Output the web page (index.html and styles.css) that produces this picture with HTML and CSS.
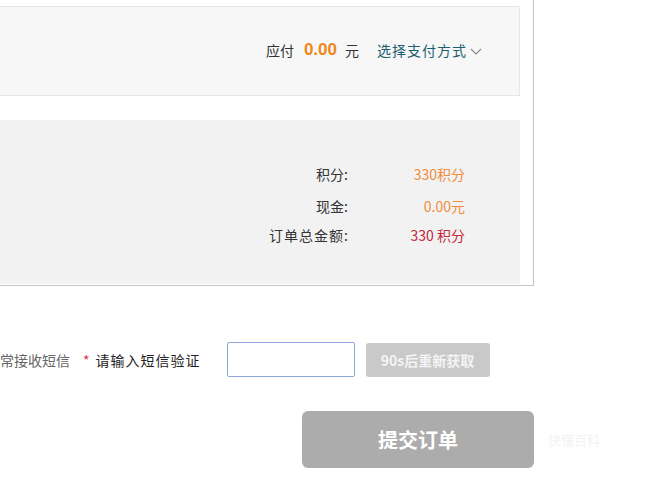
FILE: index.html
```html
<!DOCTYPE html>
<html lang="zh-CN">
<head>
  <meta charset="UTF-8" />
  <meta name="viewport" content="width=device-width, initial-scale=1.0" />
  <title>确认订单</title>
  <link rel="stylesheet" href="styles.css">
</head>
<body>
  <div class="order-box">
    <div class="pay-bar">
      <span class="pay-label">应付</span>
      <span class="pay-amount">0.00</span>
      <span class="pay-unit">元</span>
      <a href="#" class="pay-select">选择支付方式
        <svg class="chevron" width="12" height="7" viewBox="0 0 12 7">
          <path d="M1 1 L6 6 L11 1" fill="none" stroke="#8a8a8a" stroke-width="1.2" />
        </svg>
      </a>
    </div>

    <div class="summary">
      <div class="summary-row">
        <span class="summary-label">积分:</span>
        <span class="summary-value orange">330积分</span>
      </div>
      <div class="summary-row">
        <span class="summary-label">现金:</span>
        <span class="summary-value orange">0.00元</span>
      </div>
      <div class="summary-row">
        <span class="summary-label wide">订单总金额:</span>
        <span class="summary-value red">330 积分</span>
      </div>
    </div>
  </div>

  <div class="sms-row">
    <span class="sms-tip">常接收短信</span>
    <span class="required">*</span>
    <label for="smsCode" class="sms-label">请输入短信验证</label>
    <input type="text" id="smsCode" class="sms-input" />
    <button type="button" class="btn-resend" disabled>90s后重新获取</button>
  </div>

  <div class="submit-row">
    <button type="submit" class="btn-submit">提交订单</button>
    <span class="watermark">快懂百科</span>
  </div>
</body>
</html>
```

FILE: styles.css
```css
* {
  box-sizing: border-box;
  margin: 0;
  padding: 0;
}

body {
  background: #ffffff;
  font-family: 'Noto Sans CJK SC', 'Liberation Sans', sans-serif;
  font-size: 14px;
  color: #333333;
  width: 647px;
  height: 488px;
  overflow: hidden;
}

.order-box {
  width: 574px;
  margin-left: -40px;
  padding: 6px 13px 1px 34px;
  border-right: 1px solid #c6c6c6;
  border-bottom: 1px solid #c6c6c6;
}

.pay-bar {
  height: 90px;
  background: #f7f7f7;
  border: 1px solid #e6e6e6;
  display: flex;
  align-items: center;
  justify-content: flex-end;
  padding: 0 37px 3px 0;
}

.pay-label {
  color: #333333;
}

.pay-amount {
  margin-left: 10px;
  color: #f08519;
  font-family: 'Liberation Sans', sans-serif;
  font-weight: bold;
  font-size: 17px;
}

.pay-unit {
  margin-left: 8px;
  color: #333333;
}

.pay-select {
  margin-left: 18px;
  color: #1d5f6e;
  text-decoration: none;
  letter-spacing: 1px;
  display: flex;
  align-items: center;
}

.chevron {
  margin-left: 3px;
  margin-top: 4px;
}

.summary {
  margin-top: 24px;
  height: 164px;
  background: #f2f2f2;
  padding: 40px 55px 0 0;
}

.summary-row {
  display: flex;
  justify-content: flex-end;
  line-height: 29px;
}

.summary-row:first-child {
  margin-bottom: 3px;
}

.summary-label {
  color: #333333;
  margin-right: 2px;
}

.summary-label.wide {
  letter-spacing: 1px;
  margin-right: 1px;
}

.summary-value {
  width: 115px;
  text-align: right;
}

.orange {
  color: #f08c3c;
}

.red {
  color: #c6283c;
}

.sms-row {
  display: flex;
  align-items: center;
  margin-top: 56px;
  height: 35px;
}

.sms-tip {
  color: #666666;
}

.required {
  margin-left: 13px;
  color: #e0324b;
}

.sms-label {
  margin-left: 6px;
  color: #222222;
  letter-spacing: 1px;
}

.sms-input {
  margin-left: 26px;
  width: 128px;
  height: 35px;
  border: 1px solid #8fa6da;
  border-radius: 2px;
  outline: none;
}

.btn-resend {
  margin-left: 11px;
  width: 124px;
  height: 34px;
  border: none;
  border-radius: 3px;
  background: #c9c9c9;
  color: #f4f4f4;
  font-family: inherit;
  font-size: 14px;
  font-weight: bold;
}

.submit-row {
  display: flex;
  align-items: center;
  margin: 34px 0 0 302px;
}

.btn-submit {
  width: 232px;
  height: 57px;
  border: none;
  border-radius: 6px;
  background: #acacac;
  color: #ffffff;
  font-family: 'Noto Sans CJK SC', sans-serif;
  font-size: 20px;
  font-weight: bold;
}

.watermark {
  margin-left: 14px;
  color: #f3f3f3;
  font-size: 13px;
}
```
